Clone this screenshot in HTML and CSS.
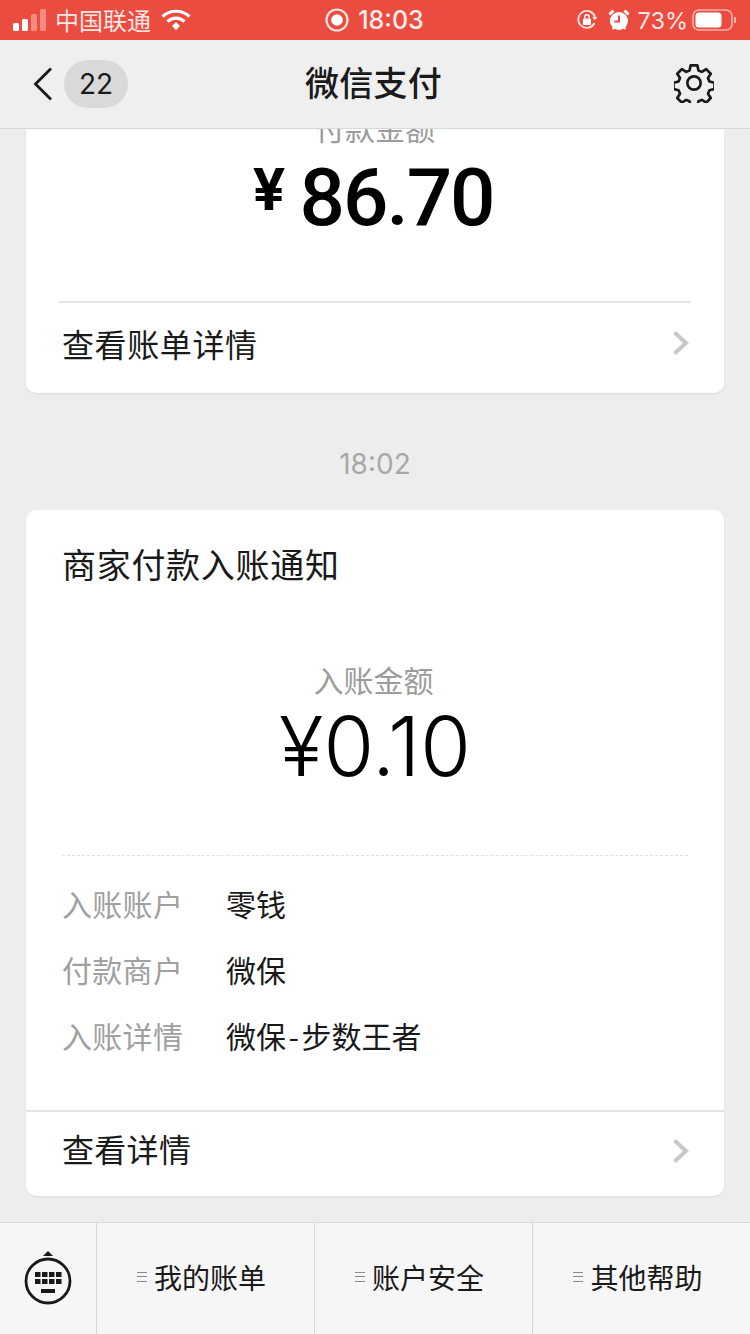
FILE: index.html
```html
<!DOCTYPE html>
<html lang="zh">
<head>
<meta charset="utf-8">
<title>微信支付</title>
<link rel="stylesheet" href="styles.css">
</head>
<body>
<div class="app">
  <header class="status">
    <div class="status-side">
      <svg class="signal" width="33" height="22" viewBox="0 0 33 22"><rect x="0" y="14" width="6" height="8" rx="1.500" fill="#fff"/><rect x="9" y="10" width="6" height="12" rx="1.500" fill="#fff"/><rect x="18" y="5" width="6" height="17" rx="1.500" fill="#f58a80"/><rect x="27" y="0" width="6" height="22" rx="1.500" fill="#f58a80"/></svg>
      <span class="carrier">中国联通</span>
      <svg class="wifi" width="30" height="22" viewBox="0 0 30 22"><path d="M1.500 7.500C9 .5 21 .5 28.500 7.500" fill="none" stroke="#fff" stroke-width="3.200"/><path d="M6.500 12.500C11.500 8 18.500 8 23.500 12.500" fill="none" stroke="#fff" stroke-width="3.200"/><path d="M11 17l4-3.800 4 3.800-4 4.300z" fill="#fff"/></svg>
    </div>
    <div class="status-center">
      <svg width="24" height="24" viewBox="0 0 24 24"><circle cx="12" cy="12" r="10.500" fill="none" stroke="#fbe3e0" stroke-width="2.200"/><circle cx="12" cy="12" r="5.800" fill="#fff"/></svg>
      <span class="clock">18:03</span>
    </div>
    <div class="status-side status-right">
      <svg width="22" height="22" viewBox="0 0 22 22"><path d="M18.500 14A8.500 8.500 0 1 1 19 8" fill="none" stroke="#fbe3e0" stroke-width="1.800"/><path d="M16 8h5.500l-2.700 3.200z" fill="#fbe3e0"/><rect x="7" y="9.500" width="8" height="6.500" rx="1" fill="#fff"/><path d="M8.800 9.500V8a2.200 2.200 0 0 1 4.400 0v1.500" fill="none" stroke="#fff" stroke-width="1.400"/></svg>
      <svg class="alarm" width="22" height="24" viewBox="0 0 22 24"><circle cx="11" cy="13" r="9" fill="#fff"/><path d="M1.500 6.500 5.500 2.500M20.500 6.500l-4-4" stroke="#fff" stroke-width="3"/><path d="M11 7.500V13.500H6.500" fill="none" stroke="#ea4c3f" stroke-width="2"/><path d="M4.500 21l2-2M17.500 21l-2-2" stroke="#fff" stroke-width="2"/></svg>
      <span class="battery-text">73%</span>
      <svg width="46" height="24" viewBox="0 0 46 24"><rect x="1" y="2" width="39" height="20" rx="6" fill="none" stroke="#f8b3ac" stroke-width="1.600"/><rect x="3.500" y="4.500" width="26" height="15" rx="3.500" fill="#fff"/><path d="M43 9v6" stroke="#f8b3ac" stroke-width="2"/></svg>
    </div>
  </header>

  <nav class="nav">
    <div class="nav-left">
      <svg width="20" height="34" viewBox="0 0 20 34"><path d="M18 1.500 2.500 17 18 32.500" fill="none" stroke="#1a1a1a" stroke-width="2.800"/></svg>
      <span class="badge">22</span>
    </div>
    <h1 class="nav-title">微信支付</h1>
    <svg class="gear" width="40" height="40" viewBox="0 0 42 42"><path d="M17.500 2.500h7l1.200 5.300 3.500 1.500 4.600-2.900 4.800 4.900-2.900 4.500 1.500 3.600 5.300 1.200v6.800l-5.300 1.200-1.500 3.600 2.900 4.500-4.800 4.900-4.600-2.900-3.500 1.500-1.200 5.300h-7l-1.200-5.300-3.500-1.500-4.600 2.900-4.800-4.900 2.900-4.500-1.500-3.600-5.300-1.200v-6.800l5.300-1.200 1.500-3.600-2.900-4.500 4.800-4.900 4.600 2.900 3.500-1.500z" fill="none" stroke="#1a1a1a" stroke-width="2.800" stroke-linejoin="round"/><circle cx="21" cy="21" r="7" fill="none" stroke="#1a1a1a" stroke-width="2.800"/></svg>
  </nav>

  <main class="feed">
    <section class="card">
      <div class="pay-head">
        <p class="amount-label">付款金额</p>
        <p class="pay-amount"><span class="pay-yen">¥</span>86.70</p>
      </div>
      <div class="inset-line"></div>
      <a class="link-row link-row-bill">
        <span>查看账单详情</span>
        <svg width="18" height="26" viewBox="0 0 18 26"><path d="M2.500 2.500 14 13 2.500 23.500" fill="none" stroke="#c8c8c8" stroke-width="4"/></svg>
      </a>
    </section>

    <time class="stamp">18:02</time>

    <section class="card">
      <h2 class="card-title">商家付款入账通知</h2>
      <div class="income">
        <p class="amount-label">入账金额</p>
        <p class="income-amount">¥0.10</p>
      </div>
      <div class="dashed"></div>
      <dl class="details">
        <div class="detail"><dt>入账账户</dt><dd>零钱</dd></div>
        <div class="detail"><dt>付款商户</dt><dd>微保</dd></div>
        <div class="detail"><dt>入账详情</dt><dd>微保<span class="hyphen">-</span>步数王者</dd></div>
      </dl>
      <a class="link-row link-row-detail">
        <span>查看详情</span>
        <svg width="18" height="26" viewBox="0 0 18 26"><path d="M2.500 2.500 14 13 2.500 23.500" fill="none" stroke="#c8c8c8" stroke-width="4"/></svg>
      </a>
    </section>
  </main>

  <footer class="menu">
    <div class="menu-key">
      <svg width="50" height="56" viewBox="0 0 50 56"><path d="M25 0l5 5H20z" fill="#1a1a1a"/><circle cx="25" cy="30" r="22" fill="none" stroke="#1a1a1a" stroke-width="2.800"/><g fill="#1a1a1a"><rect x="12" y="21" width="5.500" height="5"/><rect x="19" y="21" width="5.500" height="5"/><rect x="26" y="21" width="5.500" height="5"/><rect x="33" y="21" width="5.500" height="5"/><rect x="12" y="28" width="5.500" height="5"/><rect x="19" y="28" width="5.500" height="5"/><rect x="26" y="28" width="5.500" height="5"/><rect x="33" y="28" width="5.500" height="5"/><rect x="18" y="38" width="14" height="4"/></g></svg>
    </div>
    <div class="menu-item"><i class="bars"></i><span>我的账单</span></div>
    <div class="menu-item"><i class="bars"></i><span>账户安全</span></div>
    <div class="menu-item"><i class="bars"></i><span>其他帮助</span></div>
  </footer>
</div>
</body>
</html>
```
FILE: styles.css
```css
* { box-sizing: border-box; }
html, body { margin: 0; padding: 0; }
body {
  width: 750px;
  height: 1334px;
  overflow: hidden;
  font-family: "Noto Sans CJK SC", "Noto Sans", sans-serif;
  color: #1a1a1a;
  background: #ededed;
}
p, h1, h2, dl, dd { margin: 0; font-weight: 400; }
.app { display: flex; flex-direction: column; height: 1334px; }

.status {
  flex: 0 0 40px;
  background: #ea4c3f;
  color: #fbe6e3;
  display: grid;
  grid-template-columns: 1fr auto 1fr;
  align-items: center;
  padding: 0 12px 0 13px;
  font-family: Inter, "Noto Sans CJK SC", sans-serif;
  font-size: 24px;
}
.status-side { display: flex; align-items: center; }
.signal { margin-right: 9px; }
.carrier { font-family: "Noto Sans CJK SC", sans-serif; line-height: 40px; }
.wifi { margin-left: 10px; }
.status-center { display: flex; align-items: center; gap: 9px; margin-right: 2px; }
.clock { font-weight: 500; color: #fdeeec; font-size: 25px; }
.status-right { justify-content: flex-end; gap: 7px; }
.alarm { margin-left: 3px; }
.battery-text { font-size: 23.500px; margin-left: 1px; margin-right: -3px; }

.nav {
  flex: 0 0 89px;
  background: #efeff0;
  border-bottom: 1px solid #d8d8d8;
  display: grid;
  grid-template-columns: 1fr auto 1fr;
  align-items: center;
  padding: 0 36px 0 33px;
  position: relative;
  z-index: 2;
}
.nav-left { display: flex; align-items: center; gap: 11px; }
.badge {
  width: 64px;
  height: 48px;
  border-radius: 24px;
  background: #d9d9d9;
  font-family: Inter, sans-serif;
  font-size: 28px;
  line-height: 48px;
  text-align: center;
}
.nav-title { font-size: 34px; font-weight: 500; line-height: 48px; margin-top: -4px; letter-spacing: .3px; }
.gear { justify-self: end; margin-top: -2px; }

.feed {
  flex: 1 1 0;
  min-height: 0;
  overflow: hidden;
  display: flex;
  flex-direction: column;
  justify-content: flex-end;
  align-items: center;
  padding: 0 26px 26px;
}
.card {
  flex: none;
  width: 698px;
  background: #fff;
  border-radius: 10px;
  box-shadow: 0 1px 2px rgba(0, 0, 0, .08);
}
.amount-label {
  font-size: 30px;
  line-height: 44px;
  color: #9c9c9c;
  text-align: center;
}
.pay-head { height: 220px; padding-top: 24px; }
.pay-amount {
  display: flex;
  justify-content: center;
  align-items: flex-start;
  margin-top: 3px;
  padding-right: 4px;
  font-family: Roboto, sans-serif;
  font-weight: 500;
  font-size: 80px;
  line-height: 92px;
  letter-spacing: -2px;
  color: #000;
}
.pay-yen {
  font-family: Inter, sans-serif;
  font-size: 58px;
  line-height: 64px;
  font-weight: 700;
  letter-spacing: 0;
  margin: 5px 14px 0 0;
}
.inset-line { height: 2px; margin: 0 33px; background: #e4e4e4; }
.link-row {
  display: flex;
  justify-content: space-between;
  align-items: center;
  padding: 0 34px 0 36px;
  font-size: 32px;
  color: #1a1a1a;
}
.link-row-bill { height: 90px; padding-bottom: 10px; letter-spacing: .6px; }
.link-row-detail { height: 86px; padding-bottom: 13px; border-top: 2px solid #e4e4e4; letter-spacing: .3px; }
.link-row-detail svg { margin-top: 6px; }
.stamp {
  flex: none;
  height: 117px;
  line-height: 142px;
  font-family: Inter, sans-serif;
  font-size: 28px;
  color: #a8a8a8;
}
.card-title { font-size: 34px; line-height: 48px; padding: 30px 36px 0; letter-spacing: .7px; }
.income { height: 267px; padding-top: 69px; text-align: center; }
.income .amount-label { padding-right: 3px; }
.income-amount {
  font-family: Inter, sans-serif;
  font-weight: 300;
  font-size: 82px;
  line-height: 84px;
  color: #000;
  margin-top: 4px;
}
.dashed { margin: 0 36px; border-top: 1px dashed #e2e2e2; }
.details { padding: 14px 36px 42px; }
.detail { display: flex; height: 66px; align-items: center; font-size: 30px; }
.detail dt { width: 164px; color: #a0a0a0; letter-spacing: .3px; }
.detail dd { color: #1a1a1a; }
.hyphen { padding: 0 2.500px; }

.menu {
  flex: 0 0 112px;
  display: grid;
  grid-template-columns: 97px repeat(3, 218px);
  background: #f6f6f6;
  border-top: 1px solid #d8d8d8;
}
.menu-key, .menu-item {
  display: flex;
  align-items: center;
  justify-content: center;
  border-right: 1px solid #d8d8d8;
}
.menu-item:last-child { border-right: 0; }
.menu-item { font-size: 28px; gap: 7px; padding: 0 8px 4px 0; }
.bars {
  width: 10px;
  height: 10px;
  border-top: 1px solid #8a8a8a;
  border-bottom: 1px solid #8a8a8a;
  background: linear-gradient(#8a8a8a, #8a8a8a) center / 100% 1px no-repeat;
}
```
